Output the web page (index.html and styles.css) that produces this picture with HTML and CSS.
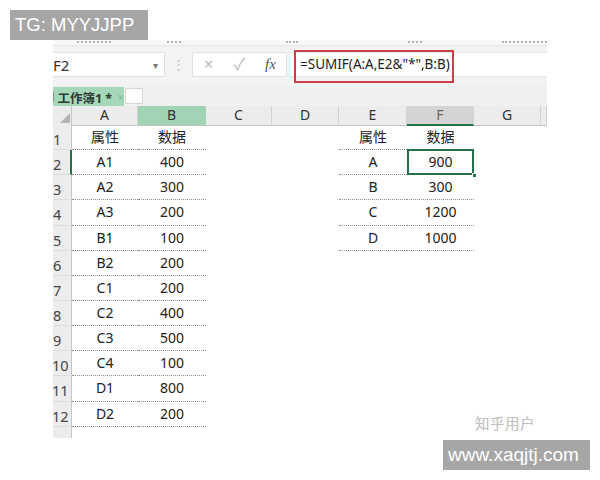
FILE: index.html
```html
<!DOCTYPE html>
<html lang="zh-CN">
<head>
  <meta charset="UTF-8">
  <meta name="viewport" content="width=device-width, initial-scale=1.0">
  <title>SUMIF 通配符求和</title>
  <link rel="stylesheet" href="styles.css">
</head>
<body>
  <div class="wm wm-tg">TG: MYYJJPP</div>

  <div class="shot">
    <!-- 功能区底部（被裁掉，只剩文字的下沿） -->
    <div class="ribbon">
      <i class="rb1"></i>
      <i class="rb2"></i>
      <i class="rb3"></i>
      <i class="rb4"></i>
      <i class="rb5"></i>
    </div>

    <!-- 编辑栏 -->
    <div class="fbar">
      <div class="namebox"><span>F2</span><span class="caret">▾</span></div>
      <div class="grip">⋮</div>
      <div class="fbtns">
        <span>×</span>
        <span>✓</span>
        <span class="fx">fx</span>
      </div>
      <div class="finput">
        <span class="formula">=SUMIF(A:A,E2&amp;"*",B:B)</span>
        <div class="mark"></div>
      </div>
    </div>

    <!-- 工作簿标签 -->
    <div class="tabs">
      <div class="tab">
        <span class="doc"></span>
        <span class="tab-name">工作簿1 *</span>
        <span class="tab-x">×</span>
      </div>
      <div class="newtab"></div>
    </div>

    <!-- 表格 -->
    <div class="sheet">
      <div class="row head">
        <div class="corner">
          <svg width="10" height="10" viewBox="0 0 10 10"><polygon points="10,0 10,10 0,10" fill="#b4b4b4"/></svg>
        </div>
        <div class="ch">A</div>
        <div class="ch ch-green">B</div>
        <div class="ch">C</div>
        <div class="ch">D</div>
        <div class="ch">E</div>
        <div class="ch ch-sel">F</div>
        <div class="ch">G</div>
        <div class="ch"></div>
      </div>

      <div class="row">
        <div class="rh">1</div>
        <div class="c t">属性</div><div class="c t">数据</div><div class="c"></div><div class="c"></div>
        <div class="c t">属性</div><div class="c t">数据</div><div class="c"></div><div class="c"></div>
      </div>
      <div class="row">
        <div class="rh rh-sel">2</div>
        <div class="c t">A1</div><div class="c t">400</div><div class="c"></div><div class="c"></div>
        <div class="c t">A</div><div class="c t sel">900</div><div class="c"></div><div class="c"></div>
      </div>
      <div class="row">
        <div class="rh">3</div>
        <div class="c t">A2</div><div class="c t">300</div><div class="c"></div><div class="c"></div>
        <div class="c t">B</div><div class="c t">300</div><div class="c"></div><div class="c"></div>
      </div>
      <div class="row">
        <div class="rh">4</div>
        <div class="c t">A3</div><div class="c t">200</div><div class="c"></div><div class="c"></div>
        <div class="c t">C</div><div class="c t">1200</div><div class="c"></div><div class="c"></div>
      </div>
      <div class="row">
        <div class="rh">5</div>
        <div class="c t">B1</div><div class="c t">100</div><div class="c"></div><div class="c"></div>
        <div class="c t">D</div><div class="c t">1000</div><div class="c"></div><div class="c"></div>
      </div>
      <div class="row">
        <div class="rh">6</div>
        <div class="c t">B2</div><div class="c t">200</div>
      </div>
      <div class="row">
        <div class="rh">7</div>
        <div class="c t">C1</div><div class="c t">200</div>
      </div>
      <div class="row">
        <div class="rh">8</div>
        <div class="c t">C2</div><div class="c t">400</div>
      </div>
      <div class="row">
        <div class="rh">9</div>
        <div class="c t">C3</div><div class="c t">500</div>
      </div>
      <div class="row">
        <div class="rh rh-2">10</div>
        <div class="c t">C4</div><div class="c t">100</div>
      </div>
      <div class="row">
        <div class="rh rh-2">11</div>
        <div class="c t">D1</div><div class="c t">800</div>
      </div>
      <div class="row">
        <div class="rh rh-2">12</div>
        <div class="c t">D2</div><div class="c t">200</div>
      </div>
      <div class="row">
        <div class="rh rh-2"></div>
      </div>
    </div>
  </div>

  <div class="wm-zhihu">知乎用户</div>
  <div class="wm wm-site">www.xaqjtj.com</div>
</body>
</html>
```

FILE: styles.css
```css
body {
  margin: 0;
  background-color: white;
  font-family: "Noto Sans", "Noto Sans CJK SC", sans-serif;
  color: #222;
}

/* 水印 */
.wm {
  position: absolute;
  height: 30px;
  line-height: 30px;
  background-color: #a6a6a6;
  color: white;
  font-family: "Liberation Sans", Arial, sans-serif;
  white-space: nowrap;
  z-index: 2;
}
.wm-tg {
  left: 10px;
  top: 10px;
  width: 133px;
  padding-left: 5px;
  font-size: 18.5px;
}
.wm-site {
  left: 443px;
  top: 440px;
  width: 142px;
  padding-left: 5px;
  font-size: 19px;
}
.wm-zhihu {
  position: absolute;
  left: 475px;
  top: 412px;
  font-family: "Noto Sans CJK SC", sans-serif;
  font-size: 14.5px;
  color: #c2c2c2;
  text-shadow: 0 0 1px #e4e4e4;
  letter-spacing: 0.5px;
}

/* 截图区域 */
.shot {
  margin: 40px 0 0 53px;
  width: 494px;
  height: 398px;
  overflow: hidden;
  background-color: white;
}

.ribbon {
  display: flex;
  align-items: flex-start;
  height: 6px;
  background-color: #f8f8f8;
  border-bottom: 1px solid #e6e6e6;
  box-sizing: border-box;
}
.ribbon i {
  height: 2px;
  margin-top: 1px;
  border-top: 2px dotted #9a9a9a;
  opacity: 0.7;
}
.rb1 { width: 34px; margin-left: 24px; }
.rb2 { width: 14px; margin-left: 56px; }
.rb3 { width: 12px; margin-left: 105px; }
.rb4 { width: 14px; margin-left: 110px; }
.rb5 { width: 45px; margin-left: 80px; }

.fbar {
  display: flex;
  height: 40px;
  padding-top: 6px;
  box-sizing: border-box;
  background-color: #f3f3f3;
  font-size: 14px;
}
.namebox {
  display: flex;
  align-items: center;
  justify-content: space-between;
  width: 112px;
  height: 25px;
  padding-right: 6px;
  box-sizing: border-box;
  background-color: white;
  border: 1px solid #e2e2e2;
  border-left: 0;
  font-size: 15px;
  color: #333;
}
.caret {
  font-size: 10px;
  color: #777;
}
.grip {
  width: 27px;
  height: 25px;
  line-height: 25px;
  text-align: center;
  color: #c4c4c4;
  font-size: 13px;
}
.fbtns {
  display: flex;
  width: 95px;
  height: 25px;
  box-sizing: border-box;
  background-color: white;
  border: 1px solid #e2e2e2;
}
.fbtns span {
  width: 31px;
  line-height: 23px;
  text-align: center;
  color: #b9b9b9;
  font-size: 16px;
}
.fbtns .fx {
  font-family: "Liberation Serif", serif;
  font-style: italic;
  font-size: 15px;
  color: #555;
}
.finput {
  position: relative;
  flex: 1;
  height: 25px;
  margin-left: 3px;
  background-color: white;
  border-top: 1px solid #e6e6e6;
  border-bottom: 1px solid #e6e6e6;
  box-sizing: border-box;
}
.formula {
  display: block;
  padding-left: 10px;
  line-height: 23px;
  font-size: 13.5px;
  color: #222;
  white-space: nowrap;
}
.mark {
  position: absolute;
  left: 4px;
  top: -3px;
  width: 160px;
  height: 33px;
  border: 2px solid #cc3f48;
  box-sizing: border-box;
}

.tabs {
  display: flex;
  align-items: flex-start;
  height: 20px;
  background-color: #f0f0f0;
}
.tab {
  display: flex;
  align-items: center;
  width: 71px;
  height: 20px;
  margin-top: 1px;
  background-color: #a5d8b9;
  font-size: 12.5px;
}
.doc {
  width: 4px;
  height: 10px;
  margin-right: 4px;
  background-color: #6f9e82;
}
.tab-name {
  font-weight: bold;
  color: #2f3a33;
  white-space: nowrap;
}
.tab-x {
  margin-left: 5px;
  color: #86b99a;
  font-size: 12px;
}
.newtab {
  width: 18px;
  height: 16px;
  margin: 2px 0 0 1px;
  background-color: white;
  border: 1px solid #d6d6d6;
  box-sizing: border-box;
}

/* 表格 */
.row {
  display: grid;
  grid-template-columns: 19px 66px 68px 66px 67px 68px 67px 67px 6px;
  height: 25.15px;
  font-size: 14px;
}
.row.head {
  height: 19px;
}
.corner {
  display: flex;
  align-items: flex-end;
  justify-content: flex-end;
  padding: 0 1px 2px 0;
  background-color: #ececec;
  border-right: 1px solid #c8c8c8;
  border-bottom: 1px solid #c2c2c2;
}
.ch {
  line-height: 18px;
  text-align: center;
  background-color: #ececec;
  border-right: 1px solid #d2d2d2;
  border-bottom: 1px solid #c2c2c2;
  color: #333;
}
.ch-green {
  background-color: #9fd4b5;
  border-right-color: #9fd4b5;
}
.ch-sel {
  background-color: #d4d4d4;
  border-bottom: 2px solid #217346;
  color: #666;
}

.rh {
  padding-top: 5px;
  background-color: #ececec;
  border-right: 1px solid #c6c6c6;
  border-bottom: 1px solid #dcdcdc;
  color: #444;
  font-size: 14.5px;
  line-height: 18px;
  white-space: nowrap;
  overflow: hidden;
}
.rh-2 {
  text-indent: -1px;
}
.rh-sel {
  border-right: 2px solid #217346;
}

.c {
  line-height: 24px;
  text-align: center;
  color: #222;
}
.t {
  border-bottom: 1px dotted #8f8f8f;
}
.sel {
  position: relative;
}
.sel::before {
  content: "";
  position: absolute;
  top: -1px;
  left: 0;
  right: 0;
  bottom: -1px;
  border: 2px solid #217346;
}
.sel::after {
  content: "";
  position: absolute;
  right: -3px;
  bottom: -4px;
  width: 5px;
  height: 5px;
  background-color: #217346;
  border: 1px solid white;
  box-sizing: border-box;
}
```
